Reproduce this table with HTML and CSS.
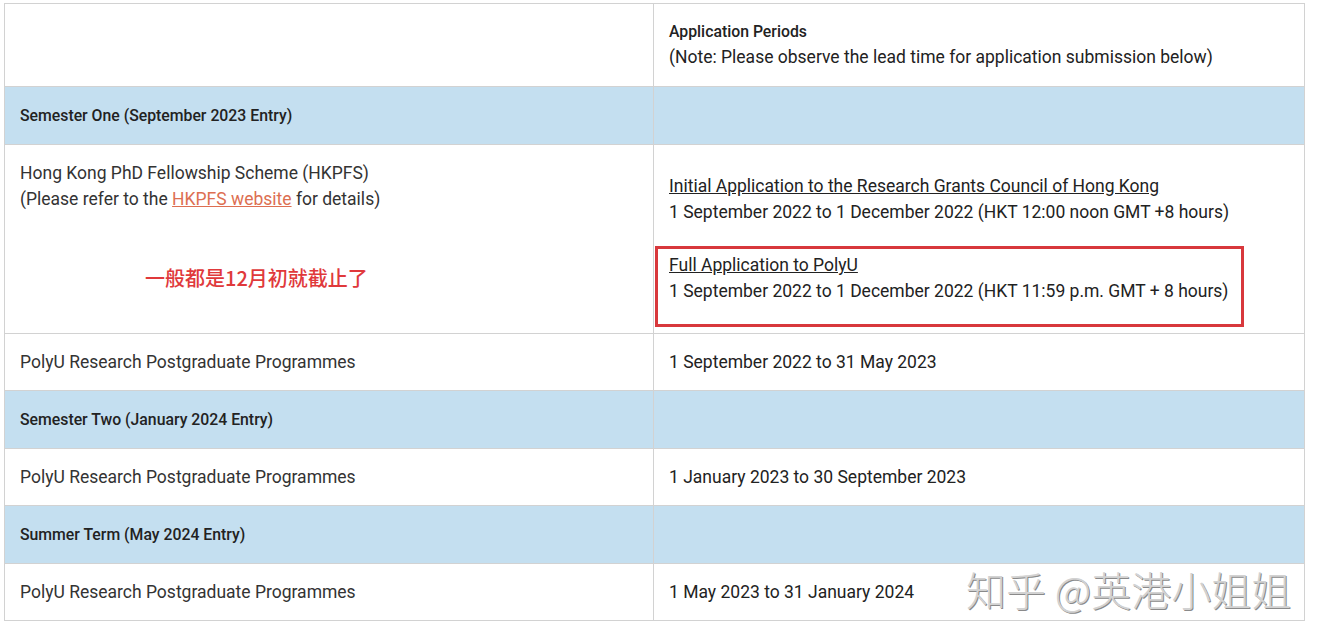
FILE: index.html
```html
<!DOCTYPE html>
<html lang="en">
<head>
<meta charset="utf-8">
<title>Application Periods</title>
<link rel="stylesheet" href="styles.css">
</head>
<body>
<div class="page">
  <table class="periods">
    <colgroup><col class="c-left"><col class="c-right"></colgroup>
    <tr class="head">
      <td></td>
      <td><div class="head-title">Application Periods</div><div class="cond">(Note: Please observe the lead time for application submission below)</div></td>
    </tr>
    <tr class="sem"><td>Semester One (September 2023 Entry)</td><td></td></tr>
    <tr class="hk">
      <td>
        <div>Hong Kong PhD Fellowship Scheme (HKPFS)<br>(Please refer to the <a href="#" class="link">HKPFS website</a> for details)</div>
        <div class="note">一般都是12月初就截止了</div>
      </td>
      <td class="hk-right">
        <p class="para cond"><a href="#" class="plain">Initial Application to the Research Grants Council of Hong Kong</a><br>1 September 2022 to 1 December 2022 (HKT 12:00 noon GMT +8 hours)</p>
        <div class="highlight">
          <p class="cond"><a href="#" class="plain">Full Application to PolyU</a><br>1 September 2022 to 1 December 2022 (HKT 11:59 p.m. GMT + 8 hours)</p>
        </div>
      </td>
    </tr>
    <tr class="row"><td>PolyU Research Postgraduate Programmes</td><td class="cond">1 September 2022 to 31 May 2023</td></tr>
    <tr class="sem"><td>Semester Two (January 2024 Entry)</td><td></td></tr>
    <tr class="row"><td>PolyU Research Postgraduate Programmes</td><td class="cond">1 January 2023 to 30 September 2023</td></tr>
    <tr class="sem"><td>Summer Term (May 2024 Entry)</td><td></td></tr>
    <tr class="row"><td>PolyU Research Postgraduate Programmes</td><td class="cond">1 May 2023 to 31 January 2024</td></tr>
  </table>
  <div class="watermark">知乎 @英港小姐姐</div>
</div>
</body>
</html>
```
FILE: styles.css
```css
html, body { margin: 0; padding: 0; background: #fff; }
body { font-family: Roboto, "Noto Sans CJK SC", sans-serif; color: #333; }
.page { position: relative; padding: 3px 0 0 4px; width: 1300px; }
.periods { border-collapse: collapse; width: 1300px; table-layout: fixed; }
.c-left { width: 649px; }
.c-right { width: 651px; }
.periods td { border: 1px solid #d2d2d2; padding: 15px; font-size: 17.5px; line-height: 26px; vertical-align: middle; }
.head td { height: 50px; padding-top: 16px; padding-bottom: 16px; }
.head-title { font-size: 15.8px; font-weight: 500; line-height: 24px; color: #222; }
.sem td { background: #c4dff0; font-size: 15.8px; font-weight: 500; color: #222; padding-top: 16px; }
.hk td { vertical-align: top; }
.hk-right { padding-top: 16px !important; padding-bottom: 6px !important; }
.para { margin: 12px 0 0; }
.cond { color: #222; }
.link { color: #dd6f52; text-decoration: underline; }
.plain { color: #222; text-decoration: underline; }
.note { margin: 52px 0 0 125px; font-size: 20px; font-weight: 500; color: #e0393b; font-family: "Noto Sans CJK SC", sans-serif; line-height: 28px; }
.highlight { margin: 21px 0 0 -14px; width: 572px; border: 3px solid #d8383c; padding: 3px 0 20px 11px; }
.highlight p { margin: 0; }
.watermark { position: absolute; left: 966px; top: 560px; font-family: "Noto Sans CJK SC", sans-serif; font-size: 40px; font-weight: 300; color: #d2d2d2; text-shadow: 1px 1px 0 #8a8a8a, -1px -1px 0 #fff; white-space: nowrap; }
```
